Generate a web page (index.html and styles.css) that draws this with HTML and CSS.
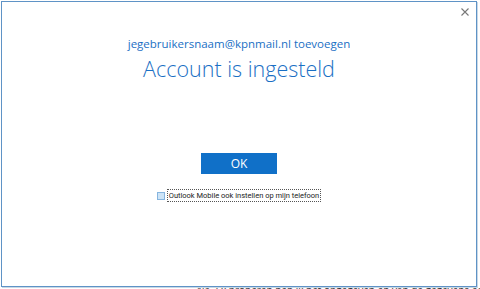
FILE: index.html
```html
<!DOCTYPE html>
<html>
<head>
<meta charset="utf-8">
<link rel="stylesheet" href="styles.css">
</head>
<body>
<div class="desktop">
  <p class="bg-text">Na 3 x proberen heb ik het opgegeven en van de gegevens een Excel sheet</p>
  <div class="dialog">
    <div class="titlebar">
      <svg class="close" width="8" height="8" viewBox="0 0 8 8"><path d="M0.5 0.5L7.5 7.5M7.5 0.5L0.5 7.5" stroke="#777" stroke-width="1.1" fill="none"/></svg>
    </div>
    <div class="content">
      <div class="subtitle">jegebruikersnaam@kpnmail.nl toevoegen</div>
      <div class="title">Account is ingesteld</div>
      <button class="ok">OK</button>
      <label class="check">
        <span class="box"></span>
        <span class="label">Outlook Mobile ook instellen op mijn telefoon</span>
      </label>
    </div>
  </div>
</div>
</body>
</html>
```

FILE: styles.css
```css
html, body {
  margin: 0;
  padding: 0;
  background: #ffffff;
  width: 480px;
  height: 289px;
  overflow: hidden;
}
.desktop {
  position: relative;
  width: 480px;
  height: 289px;
  font-family: "Open Sans", "Noto Sans", sans-serif;
}
.bg-text {
  margin: 0;
  padding: 284px 0 0 197px;
  font-size: 10px;
  line-height: 13px;
  color: #333;
  white-space: nowrap;
}
.dialog {
  position: absolute;
  left: 1px;
  top: 1px;
  width: 474px;
  height: 284px;
  border: 1px solid #5f93c6;
  background: #ffffff;
  box-shadow: 1px 1px 0 #c9d8e6;
  display: flex;
  flex-direction: column;
}
.titlebar {
  height: 28px;
  display: flex;
  justify-content: flex-end;
  align-items: flex-start;
}
.close {
  margin: 6px 7px 0 0;
}
.content {
  display: flex;
  flex-direction: column;
  align-items: center;
}
.subtitle {
  margin-top: 6px;
  font-size: 11.5px;
  line-height: 15px;
  color: #1a6fc4;
}
.title {
  margin-top: 3px;
  font-size: 21.5px;
  font-weight: 300;
  line-height: 30px;
  color: #1a6fc4;
}
.ok {
  margin-top: 69px;
  width: 76px;
  height: 21px;
  border: 0;
  background: #1070c8;
  color: #ffffff;
  font-family: "Open Sans", "Noto Sans", sans-serif;
  font-size: 12px;
  padding: 0;
}
.check {
  margin-top: 15px;
  display: flex;
  align-items: center;
  gap: 2px;
}
.box {
  width: 6px;
  height: 6px;
  border: 1px solid #86b5df;
  background: #cde4f7;
}
.label {
  font-family: Roboto, "Noto Sans", sans-serif;
  font-size: 7.5px;
  line-height: 11px;
  color: #222;
  border: 1px dotted #555;
  padding: 0 1px;
}
```
